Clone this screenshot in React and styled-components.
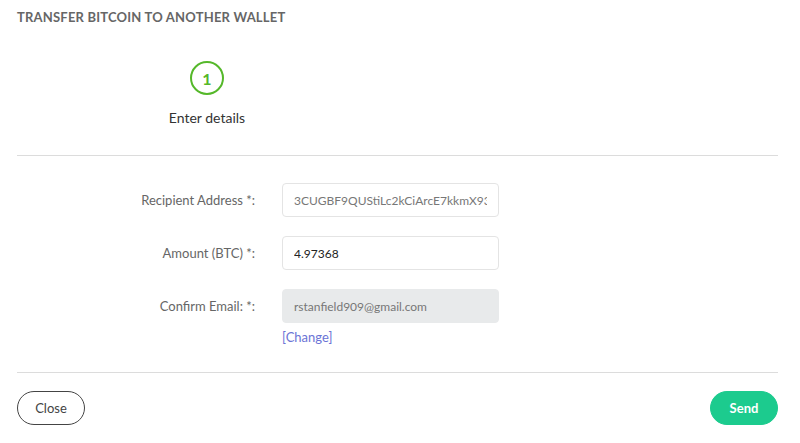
import React from 'react'
import styled, { createGlobalStyle } from 'styled-components'

const GlobalStyle = createGlobalStyle`
  html, body { margin: 0; padding: 0; background: #fff; }
  body { font-family: Lato, "Open Sans", sans-serif; color: #333; }
`

const Page = styled.div`
  width: 800px;
  height: 443px;
  box-sizing: border-box;
  padding: 10px 22px 0 17px;
`

const Title = styled.h1`
  margin: 0;
  font-size: 13px;
  line-height: 15px;
  font-weight: 700;
  letter-spacing: 0.2px;
  color: #666;
  text-transform: uppercase;
`

const Steps = styled.div`
  display: flex;
  padding: 36px 0 0 0;
  height: 130px;
  box-sizing: border-box;
`

const Step = styled.div`
  width: 380px;
  display: flex;
  flex-direction: column;
  align-items: center;
  gap: 14px;
`

const StepCircle = styled.div`
  width: 30px;
  height: 30px;
  border: 2.5px solid ${p => p.$color};
  border-radius: 50%;
  display: flex;
  align-items: center;
  justify-content: center;
  color: ${p => p.$color};
  font-weight: 700;
  font-size: 16px;
`

const StepLabel = styled.div`
  font-size: 14px;
  color: #333;
`

const Divider = styled.hr`
  margin: 0;
  border: none;
  border-top: 1px solid #dcdcdc;
`

const Form = styled.div`
  display: grid;
  grid-template-columns: 238px 217px;
  column-gap: 27px;
  row-gap: 19px;
  padding: 27px 0 27px 0;
  align-items: start;
`

const Label = styled.label`
  font-size: 13px;
  color: #666;
  text-align: right;
  line-height: 34px;
`

const Field = styled.div`
  display: flex;
  flex-direction: column;
  gap: 6px;
`

const Input = styled.input`
  box-sizing: border-box;
  width: 217px;
  height: 34px;
  padding: 0 11px;
  border: 1px solid ${p => (p.disabled ? '#e8eaeb' : '#e4e4e4')};
  border-radius: 4px;
  background: ${p => (p.disabled ? '#e8eaeb' : '#fff')};
  font-family: Lato, sans-serif;
  font-size: 12px;
  color: ${p => (p.$muted ? '#777' : '#222')};
  outline: none;
  &:disabled { color: #777; }
`

const ChangeLink = styled.a`
  font-size: 13px;
  color: #6b74d6;
  text-decoration: none;
`

const Footer = styled.div`
  display: flex;
  justify-content: space-between;
  padding-top: 18px;
`

const Button = styled.button`
  height: 34px;
  width: 68px;
  border-radius: 17px;
  font-family: Lato, sans-serif;
  font-size: 13px;
  cursor: pointer;
  border: 1px solid ${p => (p.$primary ? '#1ccb8e' : '#444')};
  background: ${p => (p.$primary ? '#1ccb8e' : '#fff')};
  color: ${p => (p.$primary ? '#fff' : '#444')};
  font-weight: ${p => (p.$primary ? 700 : 400)};
`

export default function App() {
  return (
    <>
      <GlobalStyle />
      <Page>
        <Title>Transfer Bitcoin to another wallet</Title>
        <Steps>
          <Step>
            <StepCircle $color="#55b82a">1</StepCircle>
            <StepLabel>Enter details</StepLabel>
          </Step>
        </Steps>
        <Divider />
        <Form>
          <Label>Recipient Address *:</Label>
          <Input $muted defaultValue="3CUGBF9QUStiLc2kCiArcE7kkmX93" />
          <Label>Amount (BTC) *:</Label>
          <Input defaultValue="4.97368" />
          <Label>Confirm Email: *:</Label>
          <Field>
            <Input disabled value="rstanfield909@gmail.com" />
            <ChangeLink href="#">[Change]</ChangeLink>
          </Field>
        </Form>
        <Divider />
        <Footer>
          <Button>Close</Button>
          <Button $primary>Send</Button>
        </Footer>
      </Page>
    </>
  )
}
